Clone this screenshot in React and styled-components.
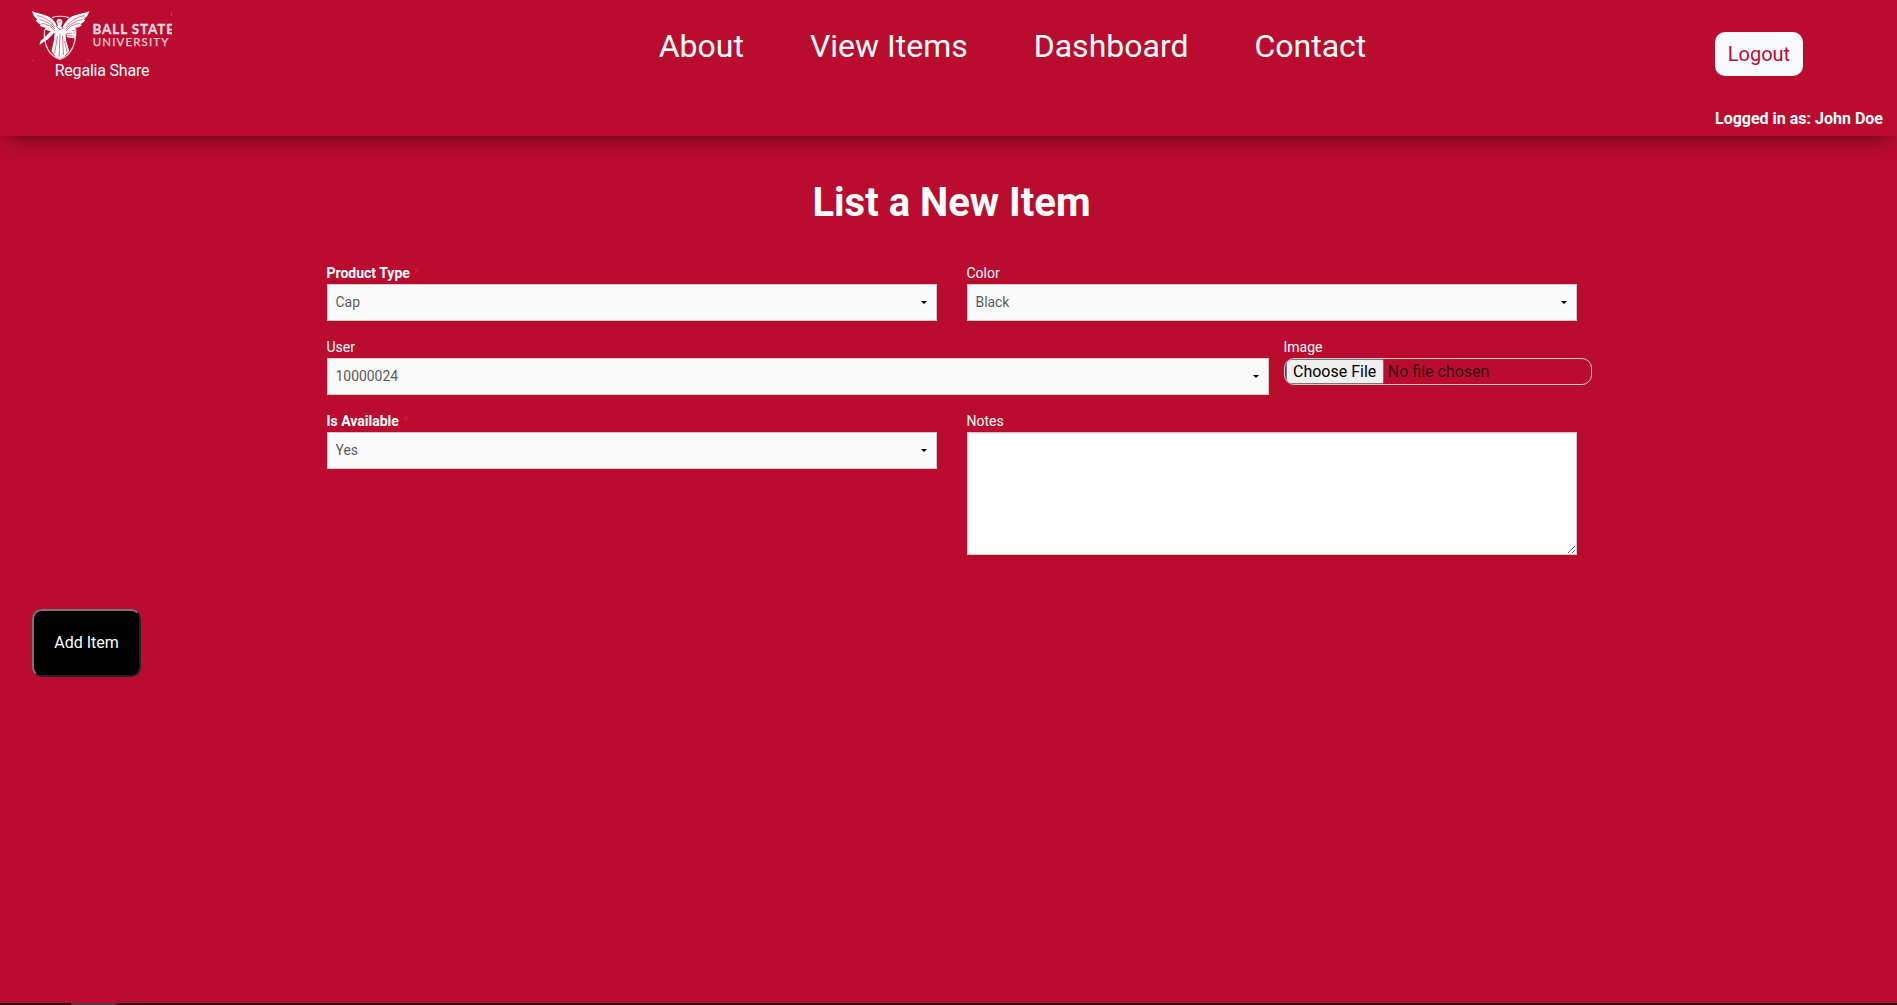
import React from "react";
import styled, { createGlobalStyle } from "styled-components";

const GlobalStyle = createGlobalStyle`
  *, *::before, *::after { box-sizing: border-box; }
  html, body { margin: 0; height: 100%; overflow: hidden; }
  body {
    background: #ba0c2f;
    color: #fff;
    font-family: Roboto, "Liberation Sans", sans-serif;
    font-size: 16px;
  }
`;

const Page = styled.div`
  display: flex;
  flex-direction: column;
  height: 1005px;
`;

const Header = styled.header`
  display: flex;
  justify-content: space-between;
  height: 136px;
  padding-left: 32px;
  box-shadow: 0 10px 18px -8px rgba(0, 0, 0, 0.5);
`;

const Brand = styled.div`
  display: flex;
  flex-direction: column;
  align-items: center;
  width: 140px;
  padding-top: 10px;
`;

const BrandName = styled.span`
  line-height: 20px;
  letter-spacing: -0.2px;
`;

const Nav = styled.nav`
  display: flex;
  gap: 66px;
  padding: 27px 0 0 138px;
`;

const NavLink = styled.a`
  font-size: 32px;
  line-height: 38px;
  color: #fff;
`;

const Account = styled.div`
  display: flex;
  flex-direction: column;
  align-items: flex-start;
  gap: 33px;
  width: 182px;
  padding-top: 32px;
`;

const LogoutButton = styled.button`
  width: 88px;
  height: 44px;
  padding: 0;
  border: 0;
  border-radius: 10px;
  background: #f8f9fc;
  color: #ba0c2f;
  font: 400 20px Roboto, sans-serif;
`;

const LoggedIn = styled.span`
  font-weight: 700;
  line-height: 19px;
`;

const Title = styled.h1`
  margin: 39px 0 0;
  padding-left: 6px;
  font-size: 40px;
  font-weight: 700;
  line-height: 56px;
  text-align: center;
`;

const Form = styled.form`
  display: flex;
  flex-direction: column;
  align-items: flex-start;
  flex: 1;
  padding-top: 32px;
`;

const Row = styled.div`
  display: grid;
  grid-template-columns: ${(p) => p.$columns};
  column-gap: ${(p) => p.$gap}px;
  min-height: 74px;
  margin-left: 326.5px;
`;

const Field = styled.label`
  display: flex;
  flex-direction: column;
`;

const Label = styled.span`
  font-size: 14px;
  line-height: 21px;
  font-weight: ${(p) => (p.$strong ? 700 : 400)};
`;

const Star = styled.span`
  color: #c8202c;
  font-weight: 400;
  margin-left: 4px;
`;

const SelectWrap = styled.span`
  display: grid;
  grid-template-columns: 1fr 16px;
  align-items: center;
`;

const SelectBox = styled.select`
  grid-area: 1 / 1 / 2 / 3;
  appearance: none;
  width: 100%;
  height: 37px;
  padding: 7px 8px 9px;
  border: 1px solid #ccc;
  border-radius: 0;
  background: #fafafa;
  color: rgba(0, 0, 0, 0.68);
  font: 400 14px/normal Roboto, sans-serif;
  letter-spacing: -0.05px;
`;

const Caret = styled.svg`
  grid-area: 1 / 2;
  width: 6px;
  height: 3px;
  pointer-events: none;
`;

const FileInput = styled.input`
  width: 308px;
  height: 27px;
  padding: 0;
  border: 1px solid #ccc;
  border-radius: 10px;
  color: rgba(0, 0, 0, 0.75);
  font: 400 16px Roboto, sans-serif;

  &::file-selector-button {
    height: 25px;
    margin: 0 4px 0 1px;
    padding: 1px 6.5px;
    border: 1px solid #767676;
    border-radius: 2px;
    background: #efefef;
    color: #000;
    font: 400 16px Roboto, sans-serif;
  }
`;

const NotesBox = styled.textarea`
  width: 100%;
  height: 123px;
  padding: 8px;
  border: 1px solid #ccc;
  border-radius: 0;
  background: #fff;
  box-shadow: inset 0 1px 2px rgba(0, 0, 0, 0.1);
  resize: vertical;
`;

const AddButton = styled.button`
  width: 109px;
  height: 68px;
  margin: 54px 0 0 32px;
  padding: 0 0 2px;
  border: 2px solid;
  border-color: #767676 #212121 #212121 #767676;
  border-radius: 10px;
  background: #000;
  color: #fff;
  font: 400 16px Roboto, sans-serif;
`;

const BottomEdge = styled.footer`
  display: flex;
  height: 2px;
  padding-left: 71px;
  background: #23060f;
`;

const EdgeTab = styled.div`
  width: 48px;
  background: #593640;
  border-right: 4px solid #48232e;
`;

const LogoArt = styled.svg`
  flex: none;
  width: 140px;
  height: 51px;
`;

function Logo() {
  return (
    <LogoArt viewBox="0 0 140 51" fill="none">
      <g stroke="#f6d9df">
        <path d="M20 7.6Q28 4.8 37 7.6" strokeWidth="1.1" />
        <path d="M12.5 20C11.5 35 16 45 28 49.5C39 45 44 34 43.7 20" strokeWidth="1.3" />
      </g>
      <g fill="#fff">
        <path d="M0 1.3C7 4.2 16 4.5 20.5 9.3Q23.5 12.5 25.4 17L23.5 24Q18 20 12.3 19.5L13.8 17.8Q9.4 17.4 7.4 15.4L9 14.5Q5 13 3.7 10.5L5.2 9.8Q1 6 0 1.3Z" />
        <path d="M57.5 1.2C50 4.2 41 4.4 36.2 9Q33 12.5 30.8 16.5L33.2 24Q38 20 44.5 19.7L43 17.8Q48 17.2 50 14.9L48.2 14.2Q52.2 12.6 53.3 10.2L51.8 9.4Q56 6 57.5 1.2Z" />
        <path d="M24.4 11.3Q25 9 27.3 9Q30.6 9.3 30.4 12.4L29.2 16.3L33.5 20.5L34 30L37.2 41L32 46.5L28 49L24 47L19.5 41L22 30L22.7 22L16 29.2L10.8 32L7.5 34.4L8.4 31L12 28L21.8 18L26 15.5Z" />
        <path d="M34 21.5L43 20.5L44 25L41 28.2L35 27.3Z" />
      </g>
      <g stroke="#ba0c2f" strokeWidth=".55">
        <path d="M5 5.5Q17 8 23 17M7.5 9.5Q17 11.5 23 19M10 13.5Q18 14 23 21M52.5 5.4Q40 8 34 17M50.5 9.5Q40 11.5 34 19M48 13.5Q39 14 34 21" />
        <path d="M25.5 26Q24 36 22.5 43M28 24L27 47M30.5 26Q31 37 31.5 45M32.5 31L35 42M24 16L28 20L31 18" />
        <path d="M35 23.5L42.8 23M35.5 25.5L42 26M26 12H29M18 28L21 30" />
      </g>
      <path d="M8 34L20 24M38 18L43.4 29" stroke="#fff" strokeWidth="1.1" />
      <text x="60.5" y="24.4" textLength="81.5" fill="#f9dfe4" stroke="#f9dfe4" strokeWidth=".3" fontFamily="Lato, sans-serif" fontWeight="700" fontSize="13.4">BALL STATE</text>
      <text x="60.8" y="36.4" textLength="75.5" fill="#f5ccd5" stroke="#f5ccd5" strokeWidth=".25" fontFamily="Lato, sans-serif" fontWeight="400" fontSize="11.4">UNIVERSITY</text>
      <path d="M139.5 2V6M0 50.5H2M55 50.5H58" stroke="#d45a72" strokeWidth=".5" />
    </LogoArt>
  );
}

function SelectField({ label, value, required }) {
  return (
    <Field>
      <Label $strong={required}>
        {label}
        {required && <Star>*</Star>}
      </Label>
      <SelectWrap>
        <SelectBox defaultValue={value}>
          <option>{value}</option>
        </SelectBox>
        <Caret viewBox="0 0 6 3">
          <path d="M0 0H6L3 3Z" fill="#000" />
        </Caret>
      </SelectWrap>
    </Field>
  );
}

export default function App() {
  return (
    <Page>
      <GlobalStyle />
      <Header>
        <Brand>
          <Logo />
          <BrandName>Regalia Share</BrandName>
        </Brand>
        <Nav>
          {["About", "View Items", "Dashboard", "Contact"].map((item) => (
            <NavLink key={item}>{item}</NavLink>
          ))}
        </Nav>
        <Account>
          <LogoutButton>Logout</LogoutButton>
          <LoggedIn>Logged in as: John Doe</LoggedIn>
        </Account>
      </Header>
      <Title>List a New Item</Title>
      <Form>
        <Row $columns="610.5px 610.5px" $gap={29.5}>
          <SelectField label="Product Type" value="Cap" required />
          <SelectField label="Color" value="Black" />
        </Row>
        <Row $columns="942.5px 308px" $gap={14.5}>
          <SelectField label="User" value="10000024" />
          <Field>
            <Label>Image</Label>
            <FileInput type="file" />
          </Field>
        </Row>
        <Row $columns="610.5px 610.5px" $gap={29.5}>
          <SelectField label="Is Available" value="Yes" required />
          <Field>
            <Label>Notes</Label>
            <NotesBox />
          </Field>
        </Row>
        <AddButton type="button">Add Item</AddButton>
      </Form>
      <BottomEdge>
        <EdgeTab />
      </BottomEdge>
    </Page>
  );
}
